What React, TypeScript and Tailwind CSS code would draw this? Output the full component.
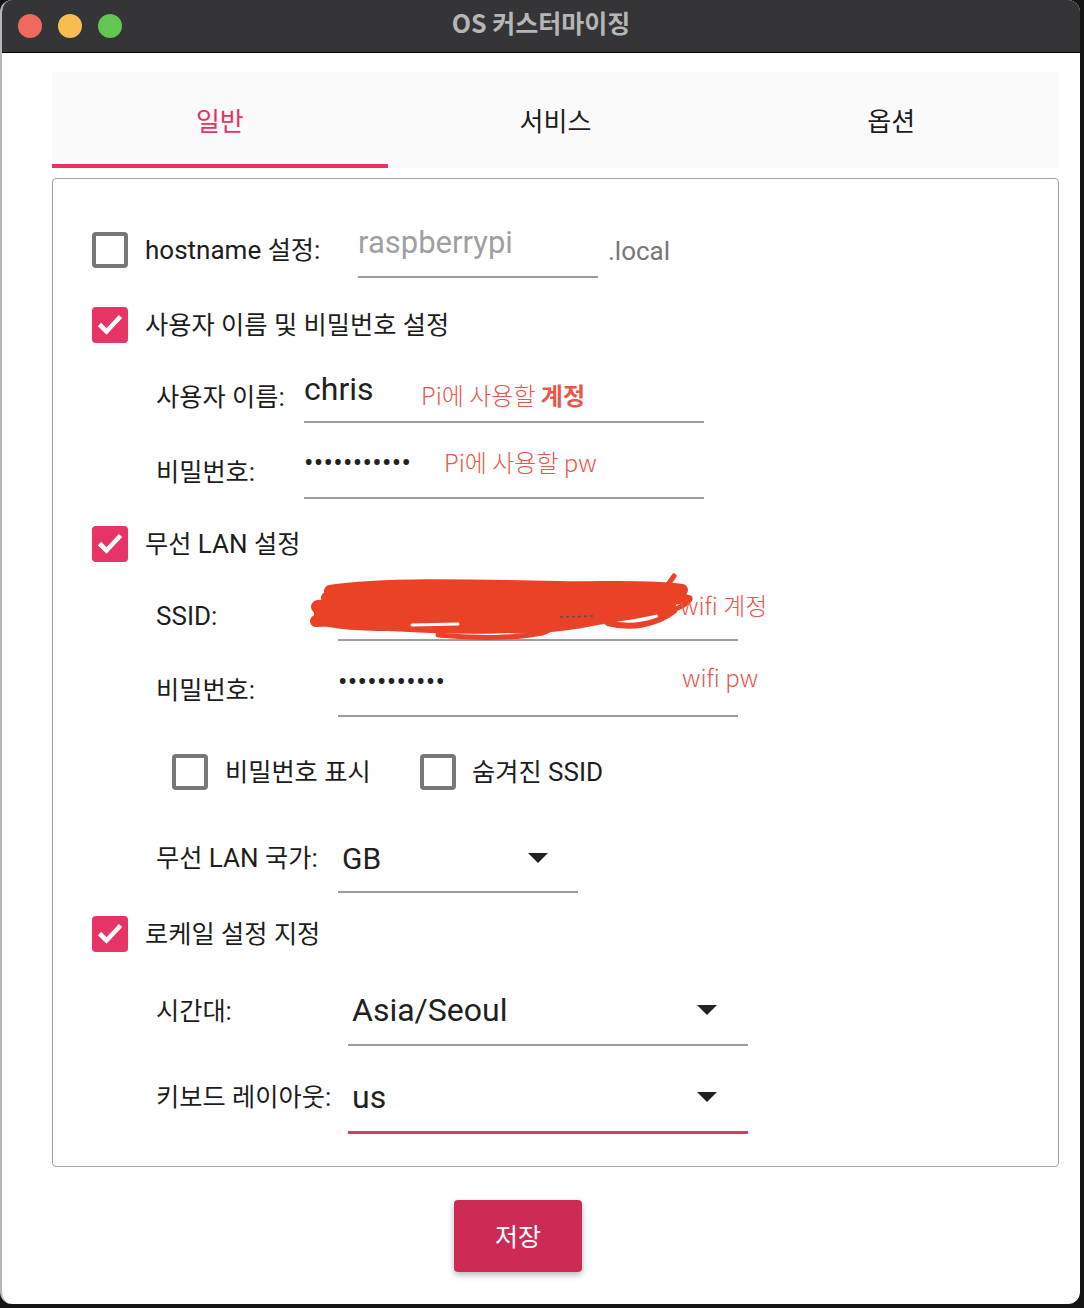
import React from "react";

const HANGUL = /([\uAC00-\uD7A3]+)/;

// Hangul glyphs in the screenshot run a little narrower than the Latin text
function Hk({ t }: { t: string }) {
  return (
    <>
      {t.split(HANGUL).map((p, i) =>
        HANGUL.test(p) ? (
          <span key={i} className="text-[0.97em]">
            {p}
          </span>
        ) : (
          <span key={i}>{p}</span>
        )
      )}
    </>
  );
}

function Box({ on }: { on?: boolean }) {
  if (on) {
    return (
      <div className="w-9 h-9 rounded-[4px] bg-[#e73466] flex items-center justify-center shrink-0">
        <svg width="36" height="36" viewBox="0 0 36 36">
          <path d="M7.5 17.5 L14.5 24.5 L28.5 9.5" fill="none" stroke="white" strokeWidth="4.6" />
        </svg>
      </div>
    );
  }
  return <div className="w-9 h-9 rounded-[4px] border-4 border-[#777777] shrink-0" />;
}

const Arrow = () => (
  <svg width="20" height="10" viewBox="0 0 20 10" className="shrink-0">
    <path d="M0 0 L20 0 L10 10 Z" fill="#212121" />
  </svg>
);

const Dots = () => <span className="text-[28px] tracking-[0.3px] text-[#212121]">•••••••••••</span>;

// the red marker scribble hiding the SSID
const Scribble = () => (
  <svg
    width="390"
    height="68"
    viewBox="0 0 390 68"
    className="absolute left-[-30px] top-[-7px] pointer-events-none"
  >
    <path
      d="M30 14 C80 8 150 10 200 12 C260 12 320 8 360 12 L378 16 L374 26 L358 34 L340 40 C320 46 300 50 290 52 C260 58 230 62 200 60 C160 62 120 60 80 58 C50 58 20 56 8 50 C4 42 6 34 14 28 C10 22 18 16 30 14 Z"
      fill="#ea4227"
    />
    <g fill="none" stroke="#ea4227" strokeLinecap="round" strokeLinejoin="round">
      <path d="M22 18 C70 10 160 12 250 14 C300 15 340 12 374 17" strokeWidth="12" />
      <path d="M10 34 C80 28 190 26 290 28 C320 29 350 27 372 24" strokeWidth="14" />
      <path d="M8 48 C90 45 180 50 260 47 C300 45 330 41 362 32" strokeWidth="12" />
      <path d="M130 62 C170 66 210 65 234 60 C248 56 242 52 228 54" strokeWidth="5" />
      <path d="M300 50 C322 56 348 52 366 38" strokeWidth="6" />
      <path d="M354 20 L366 3" strokeWidth="5" />
      <path d="M342 30 C358 26 376 22 382 25 C384 30 364 38 352 42" strokeWidth="5" />
    </g>
    <path d="M104 52 L150 51" stroke="#ffffff" strokeWidth="3" strokeLinecap="round" />
    <path d="M252 44 L286 43" stroke="#555555" strokeWidth="1.5" strokeDasharray="3 3" />
  </svg>
);

const ann = "absolute whitespace-nowrap text-[24px] leading-[30px] font-light text-[#e9564b] font-['Noto_Sans_CJK_KR',sans-serif]";

export default function App() {
  return (
    <div className="w-[1084px] h-[1308px] bg-[#141414] font-['Roboto','Noto_Sans_CJK_KR',sans-serif] text-[#1d1d1d]">
      <div className="w-[1080px] h-[1304px] bg-white rounded-[12px] overflow-hidden flex flex-col border-l-2 border-[#b8b8b8]">
        {/* title bar */}
        <div className="h-[53px] shrink-0 bg-[#353538] border-b border-black flex items-center relative">
          <div className="flex items-center gap-4 pl-[16px]">
            <span className="w-6 h-6 rounded-full bg-[#ee6a5f]" />
            <span className="w-6 h-6 rounded-full bg-[#f5be4f]" />
            <span className="w-6 h-6 rounded-full bg-[#62c554]" />
          </div>
          <div className="absolute inset-0 flex items-center justify-center pb-[6px] text-[25px] font-bold text-[#b6b6b6] font-['Noto_Sans_CJK_KR',sans-serif]">
            OS 커스터마이징
          </div>
        </div>

        <div className="pl-[50px] flex flex-col">
          {/* tabs */}
          <div className="mt-[19px] w-[1007px] h-[96px] bg-[#fafafa] grid grid-cols-3 text-[26px] font-['Noto_Sans_CJK_KR',sans-serif]">
            <div className="flex items-center justify-center border-b-4 border-[#e8325f] text-[#e8325f] pt-[2px]">일반</div>
            <div className="flex items-center justify-center pb-[2px]">서비스</div>
            <div className="flex items-center justify-center pb-[2px]">옵션</div>
          </div>

          {/* settings panel */}
          <div className="mt-[10px] w-[1007px] h-[989px] border-[1.5px] border-[#a3a3a3] rounded-[4px] pl-[39px] pt-[43px] flex flex-col text-[26px]">
            {/* hostname */}
            <div className="h-[56px] flex items-center">
              <Box />
              <span className="ml-[17px] w-[213px]">
                <Hk t="hostname 설정:" />
              </span>
              <div className="w-[240px] h-full border-b-2 border-[#9e9e9e] flex items-center pb-[12px] text-[31px] text-[#a0a0a0]">
                raspberrypi
              </div>
              <span className="ml-[10px] mt-[2px] text-[#777777]">.local</span>
            </div>

            <div className="mt-[29px] h-9 flex items-center">
              <Box on />
              <span className="ml-[17px]">
                <Hk t="사용자 이름 및 비밀번호 설정" />
              </span>
            </div>

            <div className="mt-[19px] h-[61px] flex items-center ml-[64px]">
              <span className="w-[148px] mt-[9px]">
                <Hk t="사용자 이름:" />
              </span>
              <div className="relative w-[400px] h-full border-b-2 border-[#9e9e9e] flex items-center pb-[5px] text-[32px] text-[#212121]">
                chris
                <span className={ann + " left-[117px] top-[18px]"}>
                  Pi에 사용할 <b className="font-bold">계정</b>
                </span>
              </div>
            </div>

            <div className="mt-[15px] h-[61px] flex items-center ml-[64px]">
              <span className="w-[148px] mt-[7px]">
                <Hk t="비밀번호:" />
              </span>
              <div className="relative w-[400px] h-full border-b-2 border-[#9e9e9e] flex items-center pb-[9px]">
                <Dots />
                <span className={ann + " left-[140px] top-[9px]"}>Pi에 사용할 pw</span>
              </div>
            </div>

            <div className="mt-[27px] h-9 flex items-center">
              <Box on />
              <span className="ml-[17px]">
                <Hk t="무선 LAN 설정" />
              </span>
            </div>

            <div className="mt-[18px] h-[61px] flex items-center ml-[64px]">
              <span className="w-[182px] mt-[11px]">SSID:</span>
              <div className="relative w-[400px] h-full border-b-2 border-[#9e9e9e]">
                <Scribble />
                <span className={ann + " left-[342px] top-[10px]"}>wifi 계정</span>
              </div>
            </div>

            <div className="mt-[15px] h-[61px] flex items-center ml-[64px]">
              <span className="w-[182px] mt-[7px]">
                <Hk t="비밀번호:" />
              </span>
              <div className="relative w-[400px] h-full border-b-2 border-[#9e9e9e] flex items-center pb-[7px]">
                <Dots />
                <span className={ann + " left-[344px] top-[6px]"}>wifi pw</span>
              </div>
            </div>

            <div className="mt-[37px] h-9 flex items-center ml-[80px]">
              <div className="w-[248px] flex items-center">
                <Box />
                <span className="ml-[17px]">
                  <Hk t="비밀번호 표시" />
                </span>
              </div>
              <Box />
              <span className="ml-[16px]">
                <Hk t="숨겨진 SSID" />
              </span>
            </div>

            <div className="mt-[40px] h-[63px] flex items-center ml-[64px]">
              <span className="w-[182px] mb-[7px]">
                <Hk t="무선 LAN 국가:" />
              </span>
              <div className="w-[240px] h-full border-b-2 border-[#9e9e9e] flex items-center justify-between pb-[5px] pl-[4px] pr-[30px] text-[30px] text-[#212121]">
                GB
                <Arrow />
              </div>
            </div>

            <div className="mt-[23px] h-9 flex items-center">
              <Box on />
              <span className="ml-[17px]">
                <Hk t="로케일 설정 지정" />
              </span>
            </div>

            <div className="mt-[26px] h-[68px] flex items-center ml-[64px]">
              <span className="w-[192px] mb-[2px]">
                <Hk t="시간대:" />
              </span>
              <div className="w-[400px] h-full border-b-2 border-[#9e9e9e] flex items-center justify-between pb-[2px] pl-[4px] pr-[31px] text-[32px] text-[#212121]">
                Asia/Seoul
                <Arrow />
              </div>
            </div>

            <div className="mt-[18px] h-[70px] flex items-center ml-[64px]">
              <span className="w-[192px] mb-[4px]">
                <Hk t="키보드 레이아웃:" />
              </span>
              <div className="w-[400px] h-full border-b-[3px] border-[#e8325f] flex items-center justify-between pb-[1px] pl-[4px] pr-[31px] text-[32px] text-[#212121]">
                us
                <Arrow />
              </div>
            </div>
          </div>
        </div>

        <button className="mt-[33px] ml-[452px] w-[128px] h-[72px] rounded-[4px] bg-[#cd2b55] text-white text-[25px] font-['Noto_Sans_CJK_KR',sans-serif] shadow-[0_3px_6px_rgba(0,0,0,0.28)]">
          저장
        </button>
      </div>
    </div>
  );
}
